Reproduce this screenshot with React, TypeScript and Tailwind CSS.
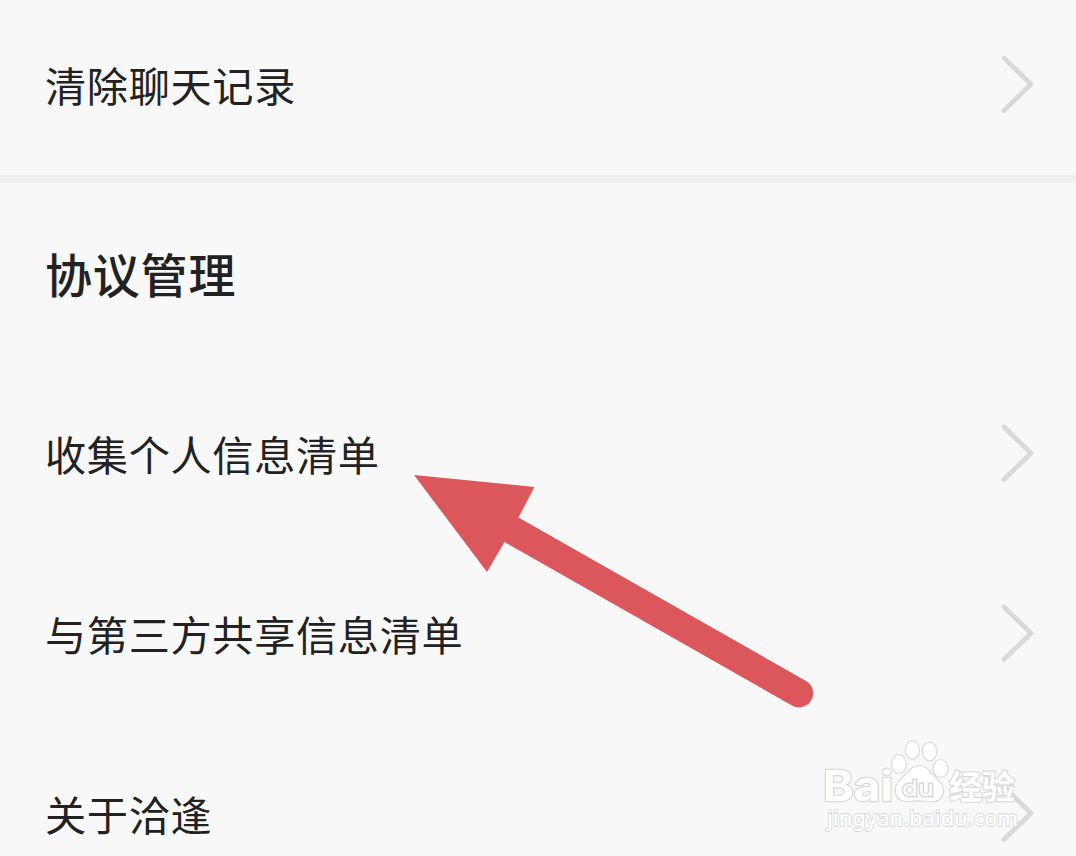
import { clsx } from "clsx";

const sans = "font-['Noto_Sans_CJK_SC',sans-serif]";

const agreements = ["收集个人信息清单", "与第三方共享信息清单", "关于洽逢"];

function Chevron() {
  return (
    <svg width="38" height="64" viewBox="0 0 38 64" fill="none" className="shrink-0">
      <path d="M6 6 L33 32.3 L6 58.5" stroke="#d9d9d9" strokeWidth="4.8" strokeLinecap="round" strokeLinejoin="round" />
    </svg>
  );
}

function Row({ label, className }: { label: string; className?: string }) {
  return (
    <button
      type="button"
      className={clsx("flex w-full shrink-0 items-center justify-between pl-[45px] pr-10 text-left", className ?? "h-[180px]")}
    >
      <span className="text-[41.2px] leading-[60px] tracking-[0.65px] text-[#222222]">{label}</span>
      <Chevron />
    </button>
  );
}

function Arrow() {
  return (
    <svg width="410" height="244" viewBox="0 0 410 244" className="pointer-events-none absolute left-[410px] top-[470px]">
      <path
        d="M4 5 L124.5 17 L108.5 47.5 L396 211 A14 14 0 0 1 382 235.5 L94.5 72 L77 102 Z"
        fill="#db575c"
      />
    </svg>
  );
}

function Watermark() {
  return (
    <svg
      width="210"
      height="106"
      viewBox="0 0 210 106"
      fill="#ffffff"
      stroke="#dadada"
      strokeWidth="1.2"
      className="pointer-events-none absolute left-[816px] top-[736px]"
    >
      <text x="7" y="64.5" fontSize="42" strokeWidth="2.4" paintOrder="stroke" textLength="70" lengthAdjust="spacingAndGlyphs" className="font-[Inter,sans-serif] font-bold">
        Bai
      </text>
      <ellipse cx="83" cy="28" rx="7.5" ry="9.5" />
      <ellipse cx="96.5" cy="14" rx="7" ry="9.3" />
      <ellipse cx="113.5" cy="15.5" rx="7.3" ry="9.3" />
      <ellipse cx="124.5" cy="32.5" rx="7.6" ry="9" />
      <path d="M103 29.5 C95 29.5 92 36 86 42 C80 47 78 51 79.5 57 C81 64 87 66.5 94 65.5 C101 64.5 105 64.5 112 65.5 C120 66.5 126 64 127.5 57 C129 50 125 47 120 42 C114 36 111 29.5 103 29.5 Z" />
      <text x="86" y="59.5" fontSize="21" strokeWidth="2.8" paintOrder="stroke" textLength="32" lengthAdjust="spacingAndGlyphs" className="font-['DejaVu_Sans',sans-serif]">
        du
      </text>
      <text x="133" y="62.5" fontSize="33" strokeWidth="2.4" paintOrder="stroke" className="font-['Noto_Sans_CJK_SC',sans-serif] font-bold">
        经验
      </text>
      <text x="11" y="90" fontSize="22.5" strokeWidth="1.8" paintOrder="stroke" textLength="191" lengthAdjust="spacingAndGlyphs" className="font-['Noto_Sans',sans-serif] font-medium">
        jingyan.baidu.com
      </text>
    </svg>
  );
}

export default function App() {
  return (
    <main className={clsx("relative flex h-[856px] w-[1076px] flex-col overflow-hidden bg-[#f8f8f8]", sans)}>
      <Row label="清除聊天记录" className="mb-[7px] h-[168px]" />
      <div className="h-2 shrink-0 bg-[#efefef]" />
      <h2 className="flex h-[180px] shrink-0 items-center pb-px pl-[45px] text-[47px] font-medium leading-[70px] tracking-[0.8px] text-[#222222]">
        协议管理
      </h2>
      {agreements.map((label) => (
        <Row key={label} label={label} />
      ))}
      <Arrow />
      <Watermark />
    </main>
  );
}
